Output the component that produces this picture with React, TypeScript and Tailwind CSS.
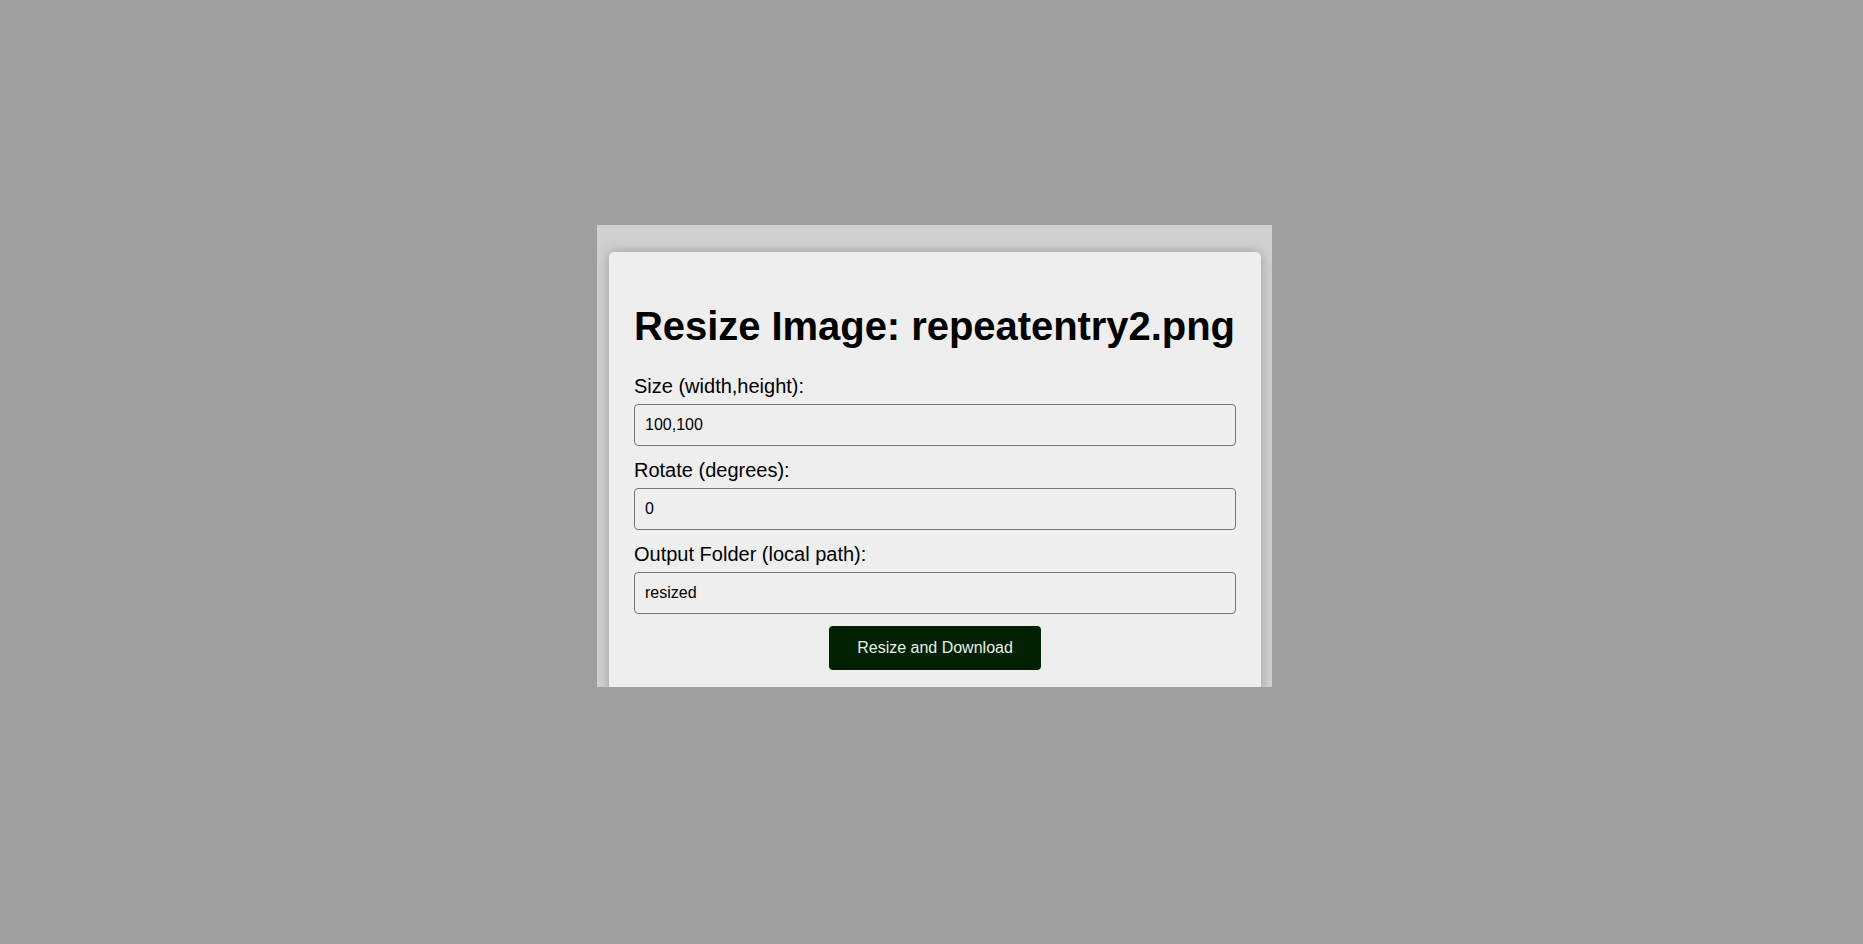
const fields = [
  { label: 'Size (width,height):', value: '100,100' },
  { label: 'Rotate (degrees):', value: '0' },
  { label: 'Output Folder (local path):', value: 'resized' },
]

export default function App() {
  return (
    <div
      className="w-[1863px] h-[944px] bg-[#a09e9f] pt-[225px] pl-[597px]"
      style={{ fontFamily: '"Liberation Sans", Arial, sans-serif' }}
    >
      <div className="w-[675px] h-[462px] overflow-hidden bg-[#d0d0d0] pt-[27px] pl-[12px]">
        <div className="w-[652px] bg-[#eeeeee] rounded-[5px] shadow-[0_0_12px_rgba(0,0,0,0.25)] p-[25px] text-black">
          <h1 className="text-[40px] font-bold leading-[46px] mt-[26px] mb-[26px] whitespace-nowrap tracking-[-0.05px]">
            Resize Image: repeatentry2.png
          </h1>
          {fields.map((f, i) => (
            <div key={i}>
              <label className="block text-[20px] leading-[23px] mb-[6px]">{f.label}</label>
              <input
                defaultValue={f.value}
                className={
                  'block w-full h-[42px] px-[10px] text-[16px] bg-transparent border border-[#767676] rounded-[4px] outline-none ' +
                  (i === fields.length - 1 ? 'mb-[12px]' : 'mb-[13px]')
                }
              />
            </div>
          ))}
          <div className="flex justify-center">
            <button className="h-[44px] w-[212px] bg-[#022102] text-[#e6efe6] text-[16px] rounded-[4px]">
              Resize and Download
            </button>
          </div>
        </div>
      </div>
    </div>
  )
}
